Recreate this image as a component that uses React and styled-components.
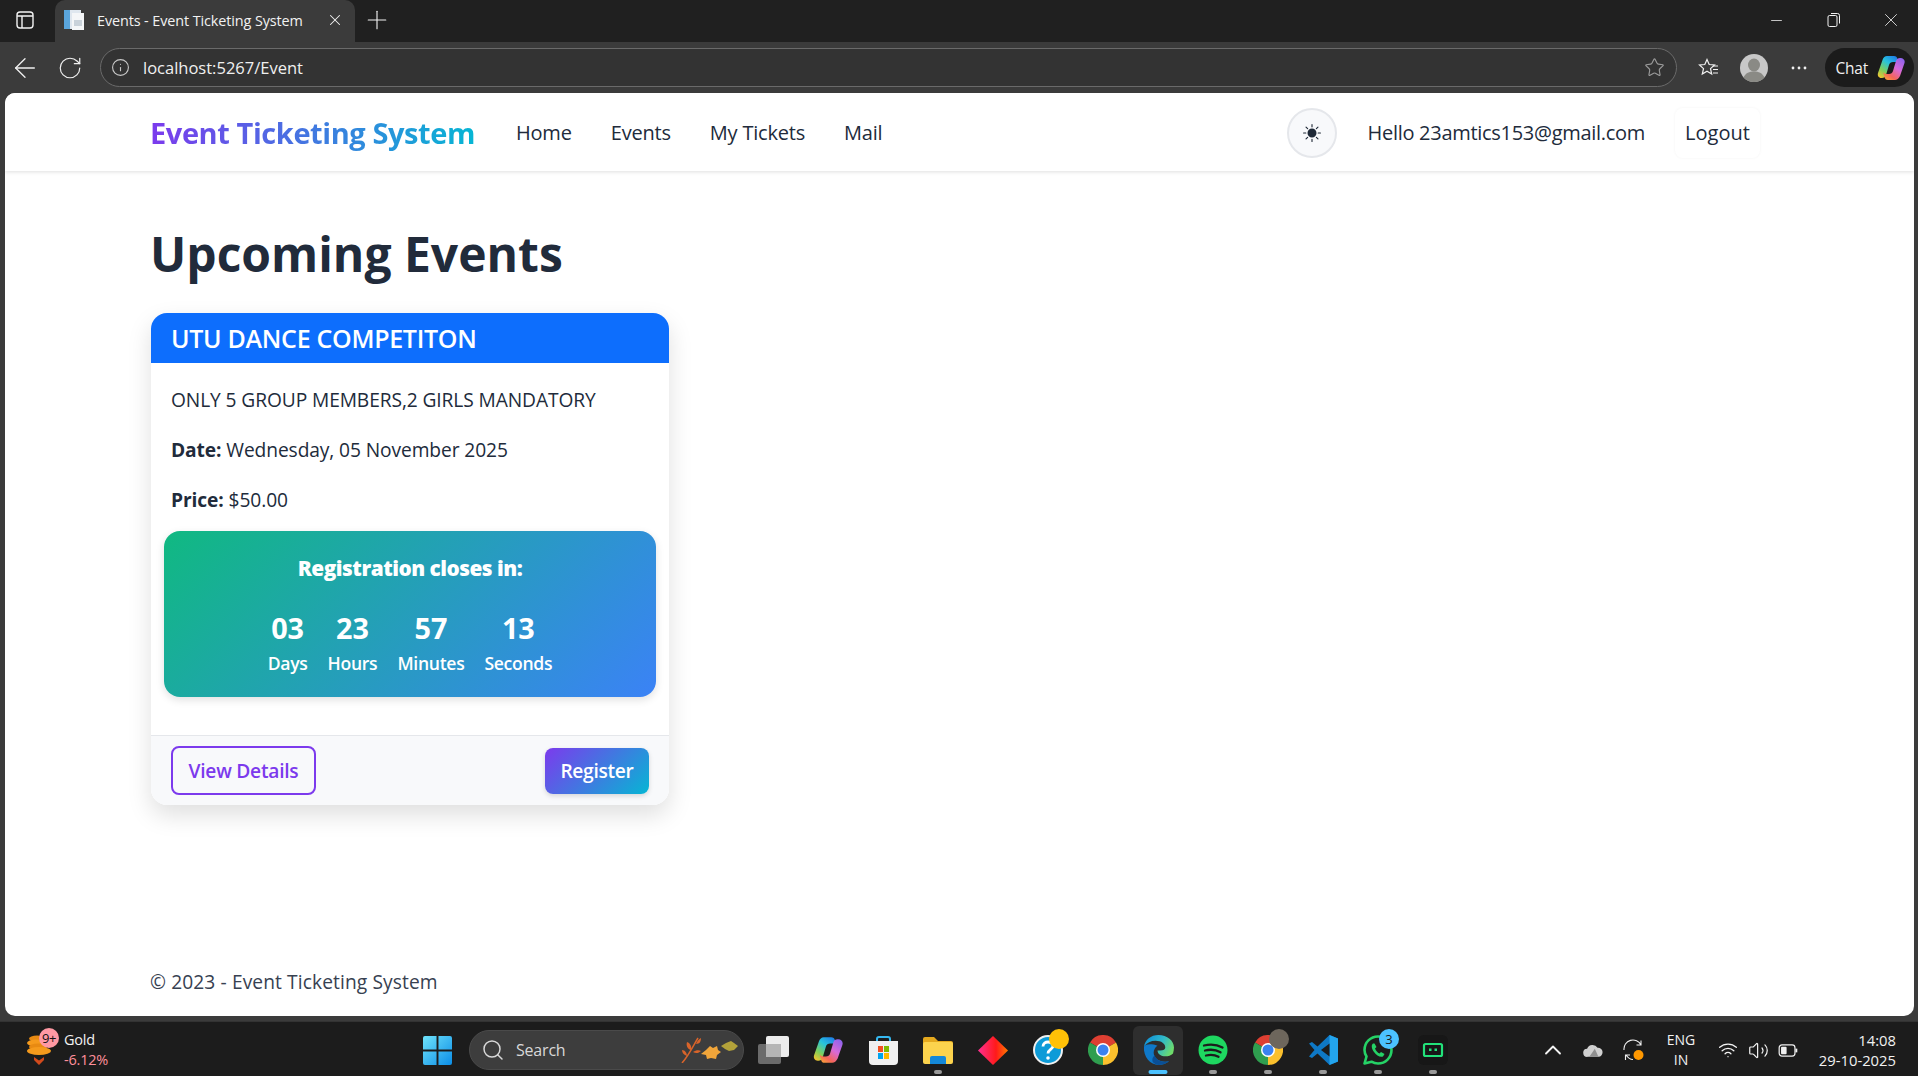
import React from "react";
import styled, { createGlobalStyle } from "styled-components";
import {
  ArrowLeft,
  ChevronUp,
  Info,
  Minus,
  Plus,
  RotateCw,
  Search,
  Star,
  Volume2,
  Wifi,
  X,
} from "lucide-react";
import { BsSunFill } from "react-icons/bs";

const UI_FONT = `"Open Sans", "Noto Sans", "Liberation Sans", sans-serif`;

const GlobalStyle = createGlobalStyle`
  html, body {
    margin: 0;
    padding: 0;
    height: 100%;
    overflow: hidden;
    background: #3b3b3b;
  }
  #root {
    height: 100%;
  }
  * {
    box-sizing: border-box;
  }
`;

const Windows = styled.div`
  height: 1076px;
  display: flex;
  flex-direction: column;
  font-family: ${UI_FONT};
  color: #212b3b;
`;

/* browser chrome */
const TitleBar = styled.div`
  height: 42px;
  flex: none;
  background: #202020;
  display: flex;
  align-items: flex-end;
  color: #f2f2f2;
`;

const SideToggle = styled.div`
  width: 55px;
  height: 42px;
  padding: 0 5px 2px 0;
  display: flex;
  align-items: center;
  justify-content: center;
`;

const Tab = styled.div`
  width: 300px;
  height: 42px;
  background: #3b3b3b;
  border-radius: 10px 10px 0 0;
  display: flex;
  align-items: center;
  padding: 0 11px 2px 9px;
  gap: 13px;
  font-size: 14.4px;
  letter-spacing: -0.1px;
`;

const TabTitle = styled.span`
  flex: 1;
  white-space: nowrap;
`;

const NewTab = styled.div`
  width: 44px;
  height: 42px;
  padding-bottom: 2px;
  display: flex;
  align-items: center;
  justify-content: center;
`;

const Spacer = styled.div`
  flex: 1;
`;

const WindowControls = styled.div`
  display: flex;
  margin-right: -2px;
`;

const WindowButton = styled.div`
  width: 57.5px;
  height: 42px;
  padding-bottom: 2px;
  display: flex;
  align-items: center;
  justify-content: center;
`;

const Toolbar = styled.div`
  height: 51px;
  flex: none;
  background: #3b3b3b;
  display: flex;
  align-items: center;
  padding: 0 4px 0 0;
  color: #f0f0f0;
`;

const ToolButton = styled.div`
  width: ${(p) => p.$w || 46}px;
  height: 39px;
  flex: none;
  display: flex;
  align-items: center;
  justify-content: center;
`;

const AddressBar = styled.div`
  flex: 1;
  height: 39px;
  margin: 0 6px 0 10px;
  border: 1px solid #6a6a6a;
  border-radius: 20px;
  background: #333333;
  display: flex;
  align-items: center;
  padding: 0 11px 0 10px;
  gap: 13px;
  font-size: 16.5px;
  letter-spacing: 0;
`;

const AddressText = styled.span`
  flex: 1;
`;

const Avatar = styled.div`
  width: 28px;
  height: 28px;
  margin: 0 5px;
`;

const ChatPill = styled.div`
  width: 89px;
  height: 39px;
  border-radius: 20px;
  background: #1b1b1b;
  display: flex;
  align-items: center;
  justify-content: flex-end;
  gap: 9px;
  padding-right: 9px;
  font-size: 15.5px;
  letter-spacing: -0.2px;
`;

/* page */
const Page = styled.div`
  flex: 1;
  min-height: 0;
  margin: 0 4px 0 5px;
  border-radius: 10px;
  background: #fff;
  display: flex;
  flex-direction: column;
  overflow: hidden;
`;

const NavBar = styled.nav`
  height: 78px;
  flex: none;
  background: #fff;
  box-shadow: 0 1px 4px rgba(0, 0, 0, 0.13);
  display: flex;
  align-items: center;
  padding: 1px 154px 0 146px;
`;

const Brand = styled.a`
  font-size: 29px;
  font-weight: 700;
  letter-spacing: -0.42px;
  white-space: nowrap;
  background: linear-gradient(90deg, #7c3aed, #06b6d4);
  -webkit-background-clip: text;
  background-clip: text;
  color: transparent;
  margin: 0 41px 0 -1px;
`;

const NavLink = styled.a`
  font-size: 20px;
  font-weight: 500;
  letter-spacing: -0.2px;
  white-space: nowrap;
  margin-right: 39px;
`;

const ThemeButton = styled.div`
  width: 50px;
  height: 50px;
  border-radius: 50%;
  background: #f8f9fb;
  border: 2px solid #e5e7eb;
  display: flex;
  align-items: center;
  justify-content: center;
  color: #1f2937;
  margin-right: 31px;
`;

const Hello = styled.span`
  font-size: 20px;
  font-weight: 500;
  letter-spacing: -0.29px;
  white-space: nowrap;
  margin-right: 30px;
`;

const LogoutButton = styled.div`
  width: 85px;
  height: 50px;
  border-radius: 8px;
  box-shadow: 0 0 3px rgba(0, 0, 0, 0.05);
  display: flex;
  align-items: center;
  justify-content: center;
  font-size: 20px;
  font-weight: 500;
`;

const Main = styled.main`
  flex: 1;
  padding: 0 146px;
  display: flex;
  flex-direction: column;
  align-items: flex-start;
`;

const Heading = styled.h1`
  margin: 44px 0 20px -1px;
  font-size: 48px;
  line-height: 78px;
  font-weight: 700;
  letter-spacing: 0;
`;

const Card = styled.article`
  width: 518px;
  height: 492px;
  border-radius: 16px;
  background: #fff;
  box-shadow: 0 10px 25px rgba(0, 0, 0, 0.13);
  display: flex;
  flex-direction: column;
  overflow: hidden;
`;

const CardHeader = styled.header`
  height: 50px;
  flex: none;
  background: #0d6efd;
  color: #fff;
  display: flex;
  align-items: center;
  padding: 0 20px;
  font-size: 25px;
  font-weight: 600;
  letter-spacing: -0.3px;
`;

const CardBody = styled.div`
  flex: 1;
  padding: 24px 13px 0;
`;

const InfoLine = styled.p`
  margin: 0 7px 24px;
  font-size: 19.2px;
  line-height: 26px;
  letter-spacing: -0.1px;
  strong {
    font-weight: 700;
  }
`;

const Countdown = styled.section`
  height: 166px;
  margin-top: -6px;
  border-radius: 16px;
  background: linear-gradient(135deg, #10b981, #3b82f6);
  box-shadow: 0 3px 8px rgba(0, 0, 0, 0.12);
  color: #fff;
  display: flex;
  flex-direction: column;
  align-items: center;
  padding-top: 24px;
`;

const CountdownTitle = styled.div`
  font-size: 20.8px;
  line-height: 26px;
  font-weight: 800;
  letter-spacing: -0.5px;
  margin-bottom: 25px;
`;

const Units = styled.div`
  display: flex;
  gap: 20px;
`;

const Unit = styled.div`
  display: flex;
  flex-direction: column;
  align-items: center;
`;

const UnitValue = styled.span`
  font-size: 28.8px;
  line-height: 44px;
  font-weight: 700;
`;

const UnitLabel = styled.span`
  font-size: 17.6px;
  line-height: 26px;
  font-weight: 600;
  letter-spacing: -0.3px;
`;

const CardFooter = styled.footer`
  height: 70px;
  flex: none;
  background: #f8f9fb;
  border-top: 1px solid #e5e7eb;
  display: flex;
  align-items: center;
  justify-content: space-between;
  padding: 0 20px;
`;

const OutlineButton = styled.div`
  width: 145px;
  height: 49px;
  border: 2px solid #7c3aed;
  border-radius: 8px;
  color: #7c3aed;
  display: flex;
  align-items: center;
  justify-content: center;
  font-size: 19.2px;
  font-weight: 600;
  letter-spacing: -0.25px;
`;

const FilledButton = styled.div`
  width: 104px;
  height: 46px;
  border-radius: 8px;
  background: linear-gradient(135deg, #7c3aed, #06b6d4);
  box-shadow: 0 2px 5px rgba(0, 0, 0, 0.14);
  color: #fff;
  display: flex;
  align-items: center;
  justify-content: center;
  font-size: 19.2px;
  font-weight: 600;
  letter-spacing: -0.3px;
`;

const PageFooter = styled.footer`
  flex: none;
  height: 47px;
  padding: 0 146px 0 145px;
  font-size: 19.2px;
  line-height: 26px;
  letter-spacing: 0.1px;
  color: #374151;
`;

/* taskbar */
const Taskbar = styled.div`
  height: 55px;
  margin-top: 5px;
  flex: none;
  background: #1c1c1c;
  border-top: 1px solid #333;
  padding-top: 2px;
  display: flex;
  align-items: center;
  color: #f2f2f2;
`;

const Widget = styled.div`
  width: 409px;
  flex: none;
  display: flex;
  align-items: center;
  padding-left: 27px;
  gap: 13px;
`;

const WidgetIcon = styled.div`
  width: 24px;
  height: 30px;
  position: relative;
`;

const WidgetBadge = styled.span`
  position: absolute;
  top: -7px;
  left: 12px;
  width: 20px;
  height: 20px;
  border-radius: 50%;
  background: #ff99a4;
  color: #111;
  font-size: 13px;
  letter-spacing: -0.5px;
  display: flex;
  align-items: center;
  justify-content: center;
`;

const WidgetText = styled.div`
  display: flex;
  flex-direction: column;
  font-size: 14.5px;
  line-height: 20px;
  letter-spacing: -0.2px;
`;

const WidgetChange = styled.span`
  color: #ff8f9b;
`;

const StartButton = styled.div`
  width: 57px;
  height: 49px;
  flex: none;
  display: flex;
  align-items: center;
  justify-content: center;
`;

const SearchBox = styled.div`
  width: 275px;
  height: 40px;
  flex: none;
  margin: 0 1.5px 0 3px;
  border-radius: 20px;
  background: #3d3d3d;
  border: 1px solid #4a4a4a;
  display: flex;
  align-items: center;
  gap: 11px;
  padding: 0 5px 0 11px;
  font-size: 16px;
  letter-spacing: -0.2px;
  color: #d8d8d8;
`;

const SearchText = styled.span`
  flex: 1;
`;

const DockItem = styled.div`
  width: 50px;
  height: 49px;
  flex: none;
  margin: 0 2.5px;
  position: relative;
  display: flex;
  align-items: center;
  justify-content: center;
  border-radius: 6px;
  background: ${(p) => (p.$active ? "#2e2e2e" : "transparent")};
  &::after {
    content: "";
    display: ${(p) => (p.$dot ? "block" : "none")};
    position: absolute;
    bottom: 1px;
    left: 50%;
    transform: translateX(-50%);
    width: ${(p) => (p.$active ? 19 : 8)}px;
    height: 4px;
    border-radius: 2px;
    background: ${(p) => (p.$active ? "#4cc2ff" : "#9a9a9a")};
  }
`;

const DockBadge = styled.span`
  position: absolute;
  top: 3px;
  right: 4px;
  width: 20px;
  height: 20px;
  border-radius: 50%;
  background: ${(p) => p.$bg};
  color: #1b1b1b;
  font-size: 13px;
  display: flex;
  align-items: center;
  justify-content: center;
`;

const Tray = styled.div`
  flex: 1;
  display: flex;
  align-items: center;
  justify-content: flex-end;
  padding-right: 22px;
`;

const TrayIcon = styled.div`
  width: 30px;
  display: flex;
  justify-content: center;
  align-items: center;
  margin-left: ${(p) => p.$ml || 0}px;
`;

const Language = styled.div`
  width: 46px;
  margin: 0 9px 0 10px;
  text-align: center;
  font-size: 14px;
  line-height: 20px;
`;

const Clock = styled.div`
  width: 93px;
  text-align: right;
  font-size: 14.8px;
  line-height: 20px;
`;

const PageIcon = () => (
  <svg width="20" height="20" viewBox="0 0 20 20">
    <rect x="0" y="0" width="17" height="19" fill="#dfe7ef" />
    <rect x="0" y="0" width="6" height="19" fill="#5aa5dc" />
    <rect x="8" y="3" width="12" height="17" fill="#f4f6f8" />
    <rect x="10" y="10" width="8" height="6" fill="#c9d2da" />
  </svg>
);

const SidebarIcon = () => (
  <svg width="18" height="18" viewBox="0 0 18 18" fill="none" stroke="#f2f2f2" strokeWidth="1.4">
    <rect x="1" y="1" width="16" height="16" rx="3" />
    <path d="M6 5v12M1 5h16" />
  </svg>
);

const RestoreIcon = () => (
  <svg width="14" height="16" viewBox="0 0 14 16" fill="none" stroke="#f2f2f2" strokeWidth="1">
    <rect x="1" y="3.500" width="9" height="11" rx="1.500" />
    <path d="M4 1.500h6.500a2 2 0 0 1 2 2v8" />
  </svg>
);

const FavoritesIcon = () => (
  <svg width="22" height="22" viewBox="0 0 22 22" fill="none" stroke="#f0f0f0" strokeWidth="1.2">
    <path d="M9 2.500l2.200 5 5.300.5-4 3.600 1.200 5.400-4.700-2.800-4.700 2.800 1.200-5.400-4-3.600 5.300-.5z" />
    <path d="M15 9h5M15 12.500h5M15 16h5" />
  </svg>
);

const AvatarIcon = () => (
  <svg width="28" height="28" viewBox="0 0 28 28">
    <circle cx="14" cy="14" r="14" fill="#c8c8c8" />
    <ellipse cx="14" cy="11" rx="6" ry="6.500" fill="#8a8a85" />
    <path d="M3.500 23.500c2-4.500 6-6 10.500-6s8.500 1.500 10.500 6A14 14 0 0 1 14 28 14 14 0 0 1 3.500 23.500z" fill="#8a8a85" />
  </svg>
);

const CopilotIcon = ({ width = 28, height = 26 }) => (
  <svg width={width} height={height} viewBox="0 0 28 26">
    <defs>
      <linearGradient id="copilotA" x1="0.8" y1="0" x2="0.1" y2="1">
        <stop offset="0" stopColor="#1f7fe8" />
        <stop offset="0.35" stopColor="#27c3dc" />
        <stop offset="0.7" stopColor="#7fd05a" />
        <stop offset="1" stopColor="#f7c52e" />
      </linearGradient>
      <linearGradient id="copilotB" x1="0.9" y1="0" x2="0.2" y2="1">
        <stop offset="0" stopColor="#8a63ef" />
        <stop offset="0.45" stopColor="#d86ad8" />
        <stop offset="0.8" stopColor="#f4655a" />
        <stop offset="1" stopColor="#f79a3c" />
      </linearGradient>
    </defs>
    <path d="M10 1h7c2 0 3 1 3.500 3L22 9c-1-1.500-2.500-2-4-2h-2c-2 0-3.500 1-4 3L9 20c-.6 2-2 3-4 3H4.500C1.500 23 .2 20.500 1 18L5.500 5C6.300 2.500 8 1 10 1z" fill="url(#copilotA)" />
    <path d="M18 25h-7c-2 0-3-1-3.500-3L6 17c1 1.500 2.500 2 4 2h2c2 0 3.500-1 4-3l3-10c.6-2 2-3 4-3h.5c3 0 4.800 2.500 4 5l-4.500 13C21.700 23.500 20 25 18 25z" fill="url(#copilotB)" />
  </svg>
);

const GoldCoins = () => (
  <svg width="24" height="30" viewBox="0 0 24 30">
    <ellipse cx="10" cy="3.500" rx="8" ry="3" fill="#e88a12" />
    <ellipse cx="9" cy="8" rx="9" ry="3.500" fill="#f59a1c" />
    <ellipse cx="11" cy="12" rx="9" ry="3.500" fill="#e88a12" />
    <ellipse cx="12" cy="16" rx="12" ry="4" fill="#f59a1c" />
    <path d="M7 22l5 3.500 5-3.500v3l-5 5-5-5z" fill="#d24a1c" />
  </svg>
);

const WindowsLogo = () => (
  <svg width="29" height="29" viewBox="0 0 30 30">
    <defs>
      <linearGradient id="winLogo" x1="0" y1="0" x2="1" y2="1">
        <stop offset="0" stopColor="#6fe3fb" />
        <stop offset="1" stopColor="#0b8de6" />
      </linearGradient>
    </defs>
    <path d="M2 0h12v14H0V2a2 2 0 0 1 2-2zM16 0h12a2 2 0 0 1 2 2v12H16zM0 16h14v14H2a2 2 0 0 1-2-2zM16 16h14v12a2 2 0 0 1-2 2H16z" fill="url(#winLogo)" />
  </svg>
);

const LeafIcon = () => (
  <svg width="57" height="26" viewBox="0 0 57 26">
    <path d="M1 26C8 18 12 9 17 1" stroke="#d9642a" strokeWidth="1.500" fill="none" />
    <path d="M10 13c-4-1-5-5-4-8 3 1 5 4 4 8zM15 7c1-3 3-5 5-6 0 3-1 6-5 6zM6 19c-3-1-5-3-5-6 3 0 5 3 5 6zM12 15c3-2 6-2 8-1-2 2-5 3-8 1z" fill="#d9642a" />
    <path d="M20 17l5-4 4-4 3 2 4-2 1 4 3 2-4 3-1 4-5-1-4 1-1-4z" fill="#f0a53a" />
    <path d="M40 9l5-3 5-2 3 2 4 3-4 4-5 1-4-2z" fill="#b3a23a" />
  </svg>
);

const TaskViewIcon = () => (
  <svg width="31" height="28" viewBox="0 0 31 28">
    <rect x="0" y="8" width="23" height="20" rx="2" fill="#6b6b6b" />
    <rect x="8" y="0" width="23" height="21" rx="2" fill="#ececec" />
    <rect x="8" y="8" width="15" height="13" fill="#b5b5b5" />
  </svg>
);

const StoreIcon = () => (
  <svg width="29" height="29" viewBox="0 0 29 29">
    <path d="M8 6V3a2 2 0 0 1 2-2h9a2 2 0 0 1 2 2v3" fill="none" stroke="#35b8f0" strokeWidth="2" />
    <path d="M0 5h29v20a4 4 0 0 1-4 4H4a4 4 0 0 1-4-4z" fill="#f0f0f0" />
    <rect x="9" y="10" width="5" height="6" fill="#f25022" />
    <rect x="15" y="10" width="5" height="6" fill="#7fba00" />
    <rect x="9" y="17" width="5" height="6" fill="#00a4ef" />
    <rect x="15" y="17" width="5" height="6" fill="#ffb900" />
  </svg>
);

const FolderIcon = () => (
  <svg width="30" height="27" viewBox="0 0 30 27">
    <path d="M2 0h9l4 4h13a2 2 0 0 1 2 2v4H0V2a2 2 0 0 1 2-2z" fill="#e5a91e" />
    <rect y="5" width="30" height="22" rx="2" fill="#fcd34d" />
    <path d="M7 27v-6a2 2 0 0 1 2-2h12a2 2 0 0 1 2 2v6z" fill="#1488d8" />
  </svg>
);

const DiamondIcon = () => (
  <svg width="30" height="29" viewBox="0 0 30 29">
    <defs>
      <linearGradient id="diamond" x1="0" y1="0" x2="1" y2="0">
        <stop offset="0" stopColor="#ff2f92" />
        <stop offset="0.6" stopColor="#ff1a1a" />
        <stop offset="1" stopColor="#ff7a00" />
      </linearGradient>
    </defs>
    <path d="M15 0l15 14.500L15 29 0 14.500z" fill="url(#diamond)" />
  </svg>
);

const HelpIcon = () => (
  <svg width="30" height="30" viewBox="0 0 30 30">
    <circle cx="15" cy="15" r="14" fill="#0d9bd8" stroke="#f0f0f0" strokeWidth="2" />
    <path d="M10 11.500c0-3 2.500-4.500 5-4.500s5 1.500 5 4c0 3.500-5 3.500-5 7.500" fill="none" stroke="#fff" strokeWidth="2.800" />
    <circle cx="15" cy="23" r="1.800" fill="#fff" />
  </svg>
);

const ChromeIcon = () => (
  <svg width="30" height="30" viewBox="0 0 30 30">
    <path d="M15 15L2 7.500a15 15 0 0 1 26 0z" fill="#de3f32" />
    <path d="M15 15l13-7.500A15 15 0 0 1 15 30z" fill="#fbc02d" />
    <path d="M15 15v15A15 15 0 0 1 2 7.500z" fill="#2f9e4f" />
    <circle cx="15" cy="15" r="7" fill="#fff" />
    <circle cx="15" cy="15" r="5.500" fill="#3b82f0" />
  </svg>
);

const EdgeIcon = () => (
  <svg width="31" height="30" viewBox="0 0 32 31">
    <defs>
      <linearGradient id="edge" x1="0" y1="0.200" x2="1" y2="0.600">
        <stop offset="0" stopColor="#0f8fd8" />
        <stop offset="0.55" stopColor="#2fb9c9" />
        <stop offset="1" stopColor="#6fdc6a" />
      </linearGradient>
    </defs>
    <path d="M16 0C8 0 2 5 1 12c3-4 7-6 12-6 6 0 10 3 10 7 0 2-2 3-5 3h-3c0 4 4 6 8 6 3 0 6-1 8-3 .5-2 1-4 1-6C32 6 25 0 16 0z" fill="url(#edge)" />
    <path d="M1 12C0 23 8 31 16 31c4 0 8-1.500 11-4-8 2-16-2-16-9 0-3 2-6 4-7C9 9 3 9 1 12z" fill="#0f78c8" />
    <path d="M10 28c2 2 4 3 6 3 4 0 8-1.500 11-4-6 2-13 0-15-6-2 2-3 4-2 7z" fill="#0a4f96" />
  </svg>
);

const SpotifyIcon = () => (
  <svg width="30" height="30" viewBox="0 0 30 30">
    <circle cx="15" cy="15" r="14.500" fill="#1ed760" />
    <path d="M6 10.500c6-1.500 13-1 18.500 2M7 15.500c5-1.200 11-.8 15.500 1.800M8 20.500c4-.9 9-.6 12.500 1.300" fill="none" stroke="#1c1c1c" strokeWidth="2.300" strokeLinecap="round" />
  </svg>
);

const VsCodeIcon = () => (
  <svg width="30" height="30" viewBox="0 0 30 30">
    <path d="M21.500 0L9.500 11.500 4 7 1 8.500 6.500 15 1 21.500 4 23l5.500-4.500L21.500 30l8.500-3.500v-23z" fill="#0e78c5" />
    <path d="M21.500 0L30 3.500v23L21.500 30z" fill="#23a5ee" />
    <path d="M21.500 8.500L13 15l8.500 6.500z" fill="#1c1c1c" />
  </svg>
);

const WhatsAppIcon = () => (
  <svg width="30" height="30" viewBox="0 0 30 30" fill="none">
    <path d="M1.500 28.500l2-7C2.300 19.500 1.500 17.300 1.500 15 1.500 7.500 7.500 1.500 15 1.500S28.500 7.500 28.500 15 22.500 28.500 15 28.500c-2.300 0-4.500-.6-6.500-1.800z" stroke="#25d366" strokeWidth="2.600" strokeLinejoin="round" />
    <path d="M10 8.500c-2 1.800-1.500 5 1 8.500s6 5.500 9 4.500l1.500-2.500-3.500-2-1.500 1.500c-2-1-3.500-2.500-4.500-5l1.500-1.500-2-3.500z" fill="#25d366" />
  </svg>
);

const TerminalIcon = () => (
  <svg width="30" height="30" viewBox="0 0 30 30">
    <rect width="30" height="30" rx="6" fill="#171717" />
    <rect x="6" y="9" width="18" height="12" rx="1.500" fill="none" stroke="#22e27a" strokeWidth="2.200" />
    <rect x="11" y="13.500" width="2.500" height="2.500" fill="#22e27a" />
    <rect x="16.500" y="13.500" width="2.500" height="2.500" fill="#22e27a" />
  </svg>
);

const OneDriveIcon = () => (
  <svg width="20" height="13" viewBox="0 0 22 14">
    <path d="M5 14a4.500 4.500 0 0 1-.5-9A6.500 6.500 0 0 1 16 4a5 5 0 0 1 1 10z" fill="#d0d0d0" />
    <path d="M7 14l6-9 4 9z" fill="#8f8f8f" />
  </svg>
);

const SyncIcon = () => (
  <svg width="21" height="22" viewBox="0 0 21 22" fill="none" stroke="#f0f0f0" strokeWidth="1.100">
    <path d="M1 11A9 9 0 0 1 18 6M18 1.500V6h-4.500M3 16c2 3 4 4.500 7 4.500M2.500 21v-5H7" />
    <circle cx="15.500" cy="16" r="5" fill="#ff9800" stroke="none" />
  </svg>
);

const BatteryIcon = () => (
  <svg width="20" height="13" viewBox="0 0 21 14" fill="none" stroke="#f0f0f0" strokeWidth="1.300">
    <rect x="1" y="1" width="17" height="12" rx="3" />
    <rect x="3" y="3" width="6" height="8" rx="1" fill="#f0f0f0" stroke="none" />
    <rect x="18.500" y="5" width="2" height="4" fill="#f0f0f0" stroke="none" />
  </svg>
);

const units = [
  { value: "03", label: "Days" },
  { value: "23", label: "Hours" },
  { value: "57", label: "Minutes" },
  { value: "13", label: "Seconds" },
];

const navLinks = ["Home", "Events", "My Tickets", "Mail"];

export default function App() {
  return (
    <Windows>
      <GlobalStyle />
      <TitleBar>
        <SideToggle>
          <SidebarIcon />
        </SideToggle>
        <Tab>
          <PageIcon />
          <TabTitle>Events - Event Ticketing System</TabTitle>
          <X size={18} strokeWidth={1.4} />
        </Tab>
        <NewTab>
          <Plus size={30} strokeWidth={0.9} />
        </NewTab>
        <Spacer />
        <WindowControls>
          <WindowButton>
            <Minus size={17} strokeWidth={1.1} />
          </WindowButton>
          <WindowButton>
            <RestoreIcon />
          </WindowButton>
          <WindowButton>
            <X size={22} strokeWidth={0.9} />
          </WindowButton>
        </WindowControls>
      </TitleBar>
      <Toolbar>
        <ToolButton $w={50}>
          <ArrowLeft size={32} strokeWidth={1} />
        </ToolButton>
        <ToolButton $w={40}>
          <RotateCw size={26} strokeWidth={1.1} />
        </ToolButton>
        <AddressBar>
          <Info size={19} strokeWidth={1.4} color="#c8c8c8" />
          <AddressText>localhost:5267/Event</AddressText>
          <Star size={21} strokeWidth={1.3} color="#9a9a9a" />
        </AddressBar>
        <ToolButton $w={52}>
          <FavoritesIcon />
        </ToolButton>
        <Avatar>
          <AvatarIcon />
        </Avatar>
        <ToolButton $w={52}>
          <svg width="18" height="4" viewBox="0 0 18 4" fill="#f0f0f0">
            <circle cx="3" cy="2" r="1.400" />
            <circle cx="9" cy="2" r="1.400" />
            <circle cx="15" cy="2" r="1.400" />
          </svg>
        </ToolButton>
        <ChatPill>
          Chat
          <CopilotIcon />
        </ChatPill>
      </Toolbar>
      <Page>
        <NavBar>
          <Brand>Event Ticketing System</Brand>
          {navLinks.map((link) => (
            <NavLink key={link}>{link}</NavLink>
          ))}
          <Spacer />
          <ThemeButton>
            <BsSunFill size={18} />
          </ThemeButton>
          <Hello>Hello 23amtics153@gmail.com</Hello>
          <LogoutButton>Logout</LogoutButton>
        </NavBar>
        <Main>
          <Heading>Upcoming Events</Heading>
          <Card>
            <CardHeader>UTU DANCE COMPETITON</CardHeader>
            <CardBody>
              <InfoLine>ONLY 5 GROUP MEMBERS,2 GIRLS MANDATORY</InfoLine>
              <InfoLine>
                <strong>Date:</strong> Wednesday, 05 November 2025
              </InfoLine>
              <InfoLine>
                <strong>Price:</strong> $50.00
              </InfoLine>
              <Countdown>
                <CountdownTitle>Registration closes in:</CountdownTitle>
                <Units>
                  {units.map((unit) => (
                    <Unit key={unit.label}>
                      <UnitValue>{unit.value}</UnitValue>
                      <UnitLabel>{unit.label}</UnitLabel>
                    </Unit>
                  ))}
                </Units>
              </Countdown>
            </CardBody>
            <CardFooter>
              <OutlineButton>View Details</OutlineButton>
              <FilledButton>Register</FilledButton>
            </CardFooter>
          </Card>
        </Main>
        <PageFooter>© 2023 - Event Ticketing System</PageFooter>
      </Page>
      <Taskbar>
        <Widget>
          <WidgetIcon>
            <GoldCoins />
            <WidgetBadge>9+</WidgetBadge>
          </WidgetIcon>
          <WidgetText>
            <span>Gold</span>
            <WidgetChange>-6.12%</WidgetChange>
          </WidgetText>
        </Widget>
        <StartButton>
          <WindowsLogo />
        </StartButton>
        <SearchBox>
          <Search size={24} strokeWidth={1.5} />
          <SearchText>Search</SearchText>
          <LeafIcon />
        </SearchBox>
        <DockItem>
          <TaskViewIcon />
        </DockItem>
        <DockItem>
          <CopilotIcon width={30} height={28} />
        </DockItem>
        <DockItem>
          <StoreIcon />
        </DockItem>
        <DockItem $dot>
          <FolderIcon />
        </DockItem>
        <DockItem>
          <DiamondIcon />
        </DockItem>
        <DockItem>
          <HelpIcon />
          <DockBadge $bg="#ffc107" />
        </DockItem>
        <DockItem>
          <ChromeIcon />
        </DockItem>
        <DockItem $active $dot>
          <EdgeIcon />
        </DockItem>
        <DockItem $dot>
          <SpotifyIcon />
        </DockItem>
        <DockItem $dot>
          <ChromeIcon />
          <DockBadge $bg="#6d665c" />
        </DockItem>
        <DockItem $dot>
          <VsCodeIcon />
        </DockItem>
        <DockItem $dot>
          <WhatsAppIcon />
          <DockBadge $bg="#4cc2ff">3</DockBadge>
        </DockItem>
        <DockItem $dot>
          <TerminalIcon />
        </DockItem>
        <Tray>
          <TrayIcon>
            <ChevronUp size={28} strokeWidth={1.6} />
          </TrayIcon>
          <TrayIcon $ml={10}>
            <OneDriveIcon />
          </TrayIcon>
          <TrayIcon $ml={10}>
            <SyncIcon />
          </TrayIcon>
          <Language>
            ENG
            <br />
            IN
          </Language>
          <TrayIcon>
            <Wifi size={20} strokeWidth={1.6} />
          </TrayIcon>
          <TrayIcon>
            <Volume2 size={21} strokeWidth={1.4} />
          </TrayIcon>
          <TrayIcon>
            <BatteryIcon />
          </TrayIcon>
          <Clock>
            14:08
            <br />
            29-10-2025
          </Clock>
        </Tray>
      </Taskbar>
    </Windows>
  );
}
